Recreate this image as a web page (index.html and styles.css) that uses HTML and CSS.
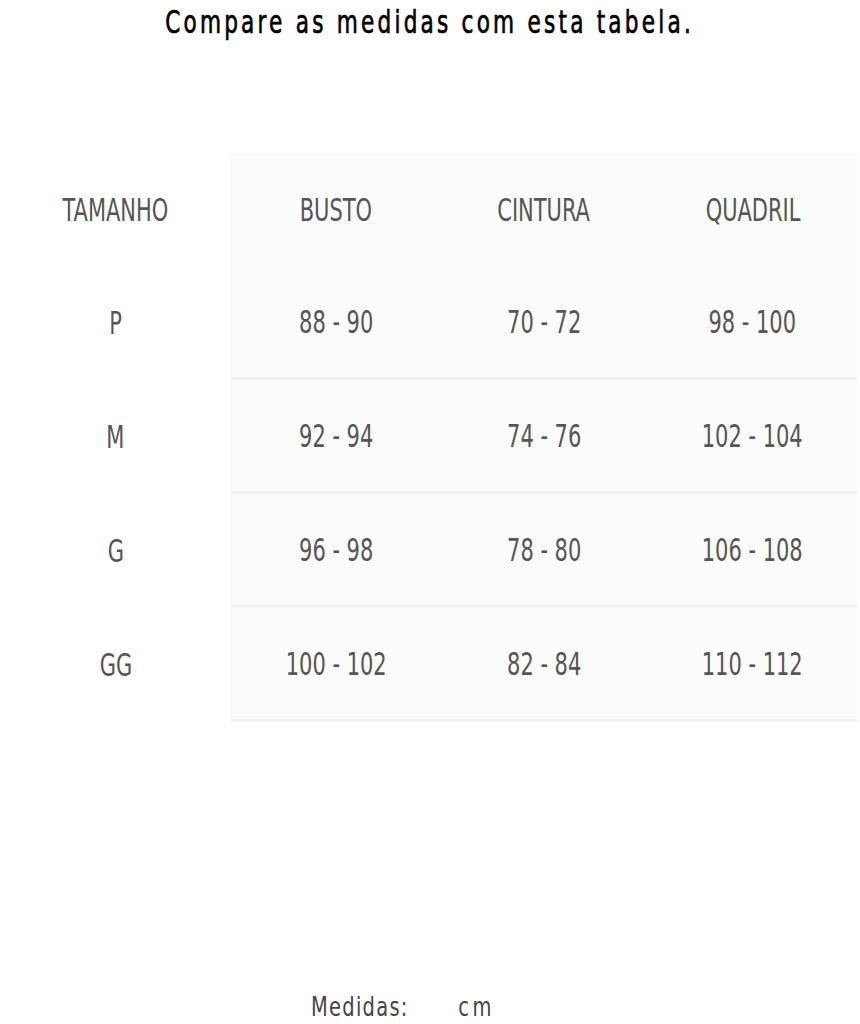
FILE: index.html
```html
<!DOCTYPE html>
<html lang="pt">
<head>
<meta charset="utf-8">
<title>Tabela de medidas</title>
<link rel="stylesheet" href="styles.css">
</head>
<body>
<h1 class="title"><span class="title-text">Compare as medidas com esta tabela.</span></h1>
<div class="size-table">
  <div class="cell head first"><span class="txt">TAMANHO</span></div>
  <div class="cell head shade edge"><span class="txt">BUSTO</span></div>
  <div class="cell head shade"><span class="txt">CINTURA</span></div>
  <div class="cell head shade"><span class="txt">QUADRIL</span></div>

  <div class="cell first"><span class="txt">P</span></div>
  <div class="cell shade row edge"><span class="txt">88 - 90</span></div>
  <div class="cell shade row"><span class="txt">70 - 72</span></div>
  <div class="cell shade row"><span class="txt">98 - 100</span></div>

  <div class="cell first"><span class="txt">M</span></div>
  <div class="cell shade row edge"><span class="txt">92 - 94</span></div>
  <div class="cell shade row"><span class="txt">74 - 76</span></div>
  <div class="cell shade row"><span class="txt">102 - 104</span></div>

  <div class="cell first"><span class="txt">G</span></div>
  <div class="cell shade row edge"><span class="txt">96 - 98</span></div>
  <div class="cell shade row"><span class="txt">78 - 80</span></div>
  <div class="cell shade row"><span class="txt">106 - 108</span></div>

  <div class="cell first"><span class="txt">GG</span></div>
  <div class="cell shade row edge"><span class="txt">100 - 102</span></div>
  <div class="cell shade row"><span class="txt">82 - 84</span></div>
  <div class="cell shade row"><span class="txt">110 - 112</span></div>
</div>
<div class="unit">
  <span class="unit-text"><span class="unit-label">Medidas:</span><span class="unit-value">cm</span></span>
</div>
</body>
</html>
```
FILE: styles.css
```css
html, body {
  margin: 0;
  padding: 0;
  background: #ffffff;
}
body {
  width: 860px;
  height: 1024px;
  overflow: hidden;
  font-family: "DejaVu Sans Condensed", "DejaVu Sans", sans-serif;
  font-stretch: condensed;
}
.title {
  margin: 0;
  padding-top: 2px;
  height: 40px;
  line-height: 40px;
  font-size: 32px;
  font-weight: 400;
  color: #000;
  text-align: center;
}
.title-text {
  display: inline-block;
  white-space: nowrap;
  letter-spacing: 4.3px;
  transform: scaleX(0.75);
  -webkit-text-stroke: 0.7px #000;
}
.size-table {
  margin-top: 112px;
  width: 857px;
  display: grid;
  grid-template-columns: 231px 1fr 1fr 1fr;
  grid-template-rows: 112px repeat(4, 114px);
}
.cell {
  display: flex;
  align-items: center;
  justify-content: center;
  font-size: 31.5px;
  color: #555;
}
.txt {
  display: inline-block;
  white-space: nowrap;
  transform: scaleX(0.74);
}
.shade {
  background: #fbfbfb;
}
.edge {
  border-left: 1px solid #f5f5f5;
}
.row {
  border-bottom: 3px solid #f1f1f1;
}
.unit {
  margin-top: 269px;
  display: flex;
  justify-content: center;
  padding-right: 54px;
  font-size: 27px;
  color: #444;
}
.unit-text {
  display: inline-block;
  white-space: nowrap;
  transform: scaleX(0.8);
  letter-spacing: 1.6px;
}
.unit-value {
  margin-left: 62px;
  letter-spacing: 4.5px;
}
```
